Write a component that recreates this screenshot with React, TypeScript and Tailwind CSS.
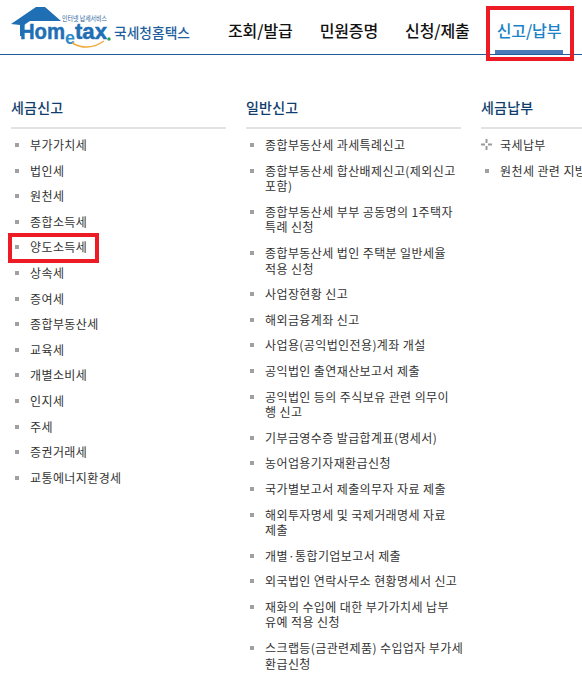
import React from 'react'

const FONT = "font-['Noto_Sans_CJK_KR','Liberation_Sans',sans-serif]"

const taxItems = ['부가가치세', '법인세', '원천세', '종합소득세', '양도소득세', '상속세', '증여세', '종합부동산세', '교육세', '개별소비세', '인지세', '주세', '증권거래세', '교통에너지환경세']

// line breaks follow the reference
const generalItems = [
    '종합부동산세 과세특례신고',
    '종합부동산세 합산배제신고(제외신고\n포함)',
    '종합부동산세 부부 공동명의 1주택자\n특례 신청',
    '종합부동산세 법인 주택분 일반세율\n적용 신청',
    '사업장현황 신고',
    '해외금융계좌 신고',
    '사업용(공익법인전용)계좌 개설',
    '공익법인 출연재산보고서 제출',
    '공익법인 등의 주식보유 관련 의무이\n행 신고',
    '기부금영수증 발급합계표(명세서)',
    '농어업용기자재환급신청',
    '국가별보고서 제출의무자 자료 제출',
    '해외투자명세 및 국제거래명세 자료\n제출',
    '개별·통합기업보고서 제출',
    '외국법인 연락사무소 현황명세서 신고',
    '재화의 수입에 대한 부가가치세 납부\n유예 적용 신청',
    '스크랩등(금관련제품) 수입업자 부가세\n환급신청',
]

const Logo = () => (
    <svg width="200" height="54" viewBox="0 0 200 54" className="shrink-0">
        <path d="M11 24 L36 7 L45 7 L61 21 L30 21 L24 25 L24 36 L20 36 L20 25 Z" fill="#1f6fb5" />
        <text x="20" y="39" fontSize="22" fontWeight="700" fill="#1f6fb5" stroke="#1f6fb5" strokeWidth="0.5" fontFamily="Liberation Sans, sans-serif" textLength="45" lengthAdjust="spacingAndGlyphs">Hom</text>
        <text x="65" y="44" fontSize="19" fontWeight="700" fill="#2f8ccb" fontFamily="Liberation Sans, sans-serif" textLength="10" lengthAdjust="spacingAndGlyphs">e</text>
        <text x="75" y="39" fontSize="22" fontWeight="700" fill="#1f6fb5" stroke="#1f6fb5" strokeWidth="0.5" fontFamily="Liberation Sans, sans-serif" textLength="32" lengthAdjust="spacingAndGlyphs">tax</text>
        <circle cx="109" cy="39" r="1.7" fill="#2e9e4f" />
        <path d="M72 43 Q88 52 104 41" stroke="#f0a93a" strokeWidth="1.5" fill="none" />
        <text x="62" y="21" fontSize="7" fill="#1f5f9e" fontFamily="Noto Sans CJK KR, sans-serif" textLength="45" lengthAdjust="spacingAndGlyphs">인터넷 납세서비스</text>
        <text x="114" y="37.5" fontSize="14" fontWeight="500" fill="#1f5f9e" fontFamily="Noto Sans CJK KR, sans-serif" textLength="76" lengthAdjust="spacingAndGlyphs">국세청홈택스</text>
    </svg>
)

const Bullet = ({ cross }: { cross?: boolean }) =>
    cross ? (
        <svg width="11" height="11" viewBox="0 0 11 11" className="absolute left-0 top-[7px]">
            <path d="M5.5 0 V4 M5.5 7 V11 M0 5.5 H4 M7 5.5 H11" stroke="#999" strokeWidth="2" />
        </svg>
    ) : (
        <span className="absolute left-[4px] top-[11px] w-[4px] h-[4px] bg-[#a0a0a0]"></span>
    )

const Column = ({ title, items, width, cross }: { title: string; items: string[]; width: string; cross?: boolean }) => (
    <div className={`${width} shrink-0`}>
        <h3 className="text-[14px] leading-[20px] font-medium text-[#0f3d6e] tracking-[0.2px] pb-[10px] border-b-2 border-[#e2e2e2]">{title}</h3>
        <ul className="mt-[3px]">
            {items.map((item, index) => (
                <li key={index} className="relative pl-[19px] py-[5px] text-[12px] leading-[15.6px] tracking-[0.4px] text-[#333] whitespace-pre">
                    <Bullet cross={cross && index === 0} />
                    {item === '양도소득세' && (
                        <span className="absolute left-[-3px] top-[-1px] w-[91px] h-[30px] border-4 border-[#ed1c24]"></span>
                    )}
                    {item}
                </li>
            ))}
        </ul>
    </div>
)

const App = () => {
    return (
        <div className={`w-[582px] h-[682px] overflow-hidden bg-white relative ${FONT}`}>
            <header className="h-[55px] border-b border-[#1f5c9c] flex">
                <Logo />
                <nav className="flex text-[16px] font-medium tracking-[-0.1px] text-[#111] ml-[28px] gap-[27px] h-[54px] pt-[5px] items-center">
                    <a>조회/발급</a>
                    <a>민원증명</a>
                    <a>신청/제출</a>
                    <a className="relative text-[#1a82c8] h-full flex items-center border-b-4 border-[#4a7db8] px-[2px] pt-[4px] ml-[-2px]">
                        신고/납부
                        <span className="absolute left-[-9px] right-[-11px] top-[1px] h-[55px] border-4 border-[#ed1c24]"></span>
                    </a>
                </nav>
            </header>
            <main className="flex gap-[20px] pl-[11px] pt-[42px]">
                <Column title="세금신고" items={taxItems} width="w-[215px]" />
                <Column title="일반신고" items={generalItems} width="w-[215px]" />
                <Column title="세금납부" items={['국세납부', '원천세 관련 지방소득세']} width="w-[215px]" cross />
            </main>
        </div>
    )
}

export default App
